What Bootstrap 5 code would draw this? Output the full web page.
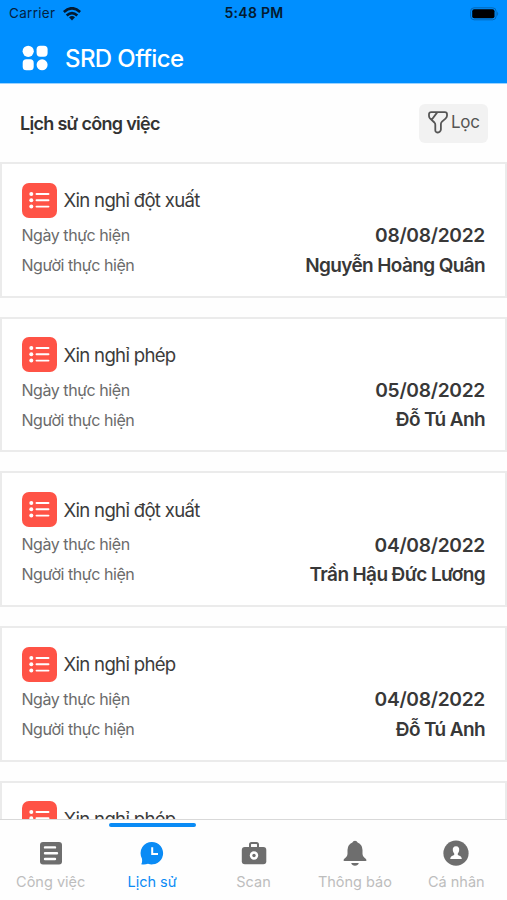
<!DOCTYPE html>
<html lang="vi">
<head>
<meta charset="utf-8">
<meta name="viewport" content="width=device-width, initial-scale=1">
<title>SRD Office</title>
<link href="https://cdn.jsdelivr.net/npm/bootstrap@5.3.0/dist/css/bootstrap.min.css" rel="stylesheet">
<style>
  body { font-family: Inter, "Liberation Sans", sans-serif; background: #fefefe; color: #333; height: 900px; line-height: 1.2; }
  svg { display: block; flex: none; }
  .app-head { background: #008fff; height: 84px; border-bottom: 1px solid #9bd3ff; }
  .status { height: 27px; padding: 0 8px 0 9px; font-size: 13.5px; color: #04223f; }
  .status > * { flex: 1 1 0; }
  .carrier { letter-spacing: .3px; }
  .clock { font-weight: 600; font-size: 14px; letter-spacing: .3px; color: #041a30; }
  .brand { height: 61px; padding: 1px 0 0 22px; gap: 17px; color: #fff; font-size: 24px; font-weight: 500; letter-spacing: -.6px; }
  .brand span { padding-top: 2px; }
  .title-row { height: 78px; padding: 0 19px 0 20px; }
  .page-title { font-size: 18px; font-weight: 600; letter-spacing: -.7px; padding-top: 1px; }
  .filter { width: 69px; height: 39px; background: #f2f2f2; border-radius: 6px; font-size: 17px; color: #555; gap: 3px; padding: 0 0 1px 9px; letter-spacing: -.3px; }
  .job { height: 135.5px; margin-bottom: 19.2px; border: 2px solid #ebebeb; border-radius: 0; background: #fff; padding: 18px 20px 0 19.5px; flex: none; }
  .job-name { height: 36px; gap: 7px; margin-bottom: 2.8px; font-size: 18.6px; letter-spacing: -.7px; color: #3c3c3c; }
  .job-name span { padding-top: 1px; }
  .job-line { height: 29.8px; color: #6b6b6b; font-size: 16px; letter-spacing: -.45px; }
  .job-line strong { color: #383838; font-weight: 600; font-size: 19.2px; letter-spacing: -.3px; }
  .job-line .person { font-size: 19px; letter-spacing: -.62px; padding-top: 1px; }
  .tabs { height: 81px; border-top: 1px solid #d9d9d9; background: #fefefe; }
  .tab { flex: 1 1 0; color: #bdbdbd; font-size: 14.5px; padding-top: 20px; gap: 7px; }
  .tab svg { color: #6e6e6e; }
  .tab.current, .tab.current svg { color: #0a8bf5; }
  .tab-bar { top: 3px; left: 8px; width: 87px; height: 4px; border-radius: 2px; background: #0a8bf5; }
</style>
</head>
<body class="d-flex flex-column overflow-hidden">
<svg width="0" height="0" class="position-absolute"><defs>
  <symbol id="list" viewBox="0 0 35 35"><rect width="35" height="35" rx="7" fill="#ff5346"/><g fill="#fff"><circle cx="9.3" cy="11" r="2"/><circle cx="9.3" cy="17.3" r="2"/><circle cx="9.3" cy="23.6" r="2"/></g><path d="M14.5 11H26.5M14.5 17.3H26.5M14.5 23.6H26.5" stroke="#fff" stroke-width="1.9" stroke-linecap="round"/></symbol>
</defs></svg>
<header class="app-head flex-shrink-0">
  <div class="status d-flex align-items-center">
    <div class="d-flex align-items-center"><span class="carrier me-1 pe-1">Carrier</span>
      <svg width="18" height="14" viewBox="0 0 18 14" fill="none" stroke="#041a30" stroke-width="2.7"><path d="M.8 5Q9-2.4 17.2 5M3.7 8.5Q9 3.8 14.3 8.5"/><path d="M6 10.3Q9 7.8 12 10.3L9 13.5Z" fill="#041a30" stroke="none"/></svg></div>
    <div class="clock text-center">5:48 PM</div>
    <div class="d-flex justify-content-end"><svg width="29" height="14" viewBox="0 0 29 14"><rect x=".6" y=".8" width="25.5" height="12" rx="3.5" fill="none" stroke="#0467b5"/><rect x="2.2" y="2.3" width="22.3" height="9" rx="2" fill="#000"/><path d="M27.2 4.5q2 2.3 0 4.6z" fill="#0467b5"/></svg></div>
  </div>
  <div class="brand d-flex align-items-center"><svg width="26" height="26" viewBox="0 0 26 26" fill="#fff"><circle cx="6.2" cy="6.3" r="5.6"/><rect x="14.6" y=".7" width="11" height="11" rx="3.6"/><rect x=".7" y="14.3" width="11" height="11" rx="3.6"/><circle cx="20.1" cy="19.8" r="5.5"/></svg><span>SRD Office</span></div>
</header>
<div class="title-row d-flex align-items-center justify-content-between flex-shrink-0">
  <div class="page-title">Lịch sử công việc</div>
  <button class="filter btn border-0 d-flex align-items-center"><svg width="20" height="23" viewBox="0 0 20 23" fill="none" stroke="#555" stroke-width="1.8" stroke-linejoin="round"><path d="M3.3 1.2H16.8Q19 1.2 19 3.2V4.8Q19 6.3 17.5 7.6L14 10.6Q12.9 11.6 12.9 13V18.6Q12.9 19.9 11.7 20.7Q9.7 22 8.2 21.1Q7.3 20.5 7.3 19.2V13.7Q7.3 12.5 6.4 11.5L2 7.3Q1 6.2 1 4.9V3.2Q1 1.2 3.3 1.2ZM9.2 1.4L3.7 8.8"/></svg><span>Lọc</span></button>
</div>
<main class="flex-grow-1 overflow-hidden d-flex flex-column">
  <article class="job card"><div class="job-name d-flex align-items-center"><svg width="35" height="35"><use href="#list"/></svg><span>Xin nghỉ đột xuất</span></div><div class="job-line d-flex align-items-center justify-content-between"><span>Ngày thực hiện</span><strong>08/08/2022</strong></div><div class="job-line d-flex align-items-center justify-content-between"><span>Người thực hiện</span><strong class="person">Nguyễn Hoàng Quân</strong></div></article>
  <article class="job card"><div class="job-name d-flex align-items-center"><svg width="35" height="35"><use href="#list"/></svg><span>Xin nghỉ phép</span></div><div class="job-line d-flex align-items-center justify-content-between"><span>Ngày thực hiện</span><strong>05/08/2022</strong></div><div class="job-line d-flex align-items-center justify-content-between"><span>Người thực hiện</span><strong class="person">Đỗ Tú Anh</strong></div></article>
  <article class="job card"><div class="job-name d-flex align-items-center"><svg width="35" height="35"><use href="#list"/></svg><span>Xin nghỉ đột xuất</span></div><div class="job-line d-flex align-items-center justify-content-between"><span>Ngày thực hiện</span><strong>04/08/2022</strong></div><div class="job-line d-flex align-items-center justify-content-between"><span>Người thực hiện</span><strong class="person">Trần Hậu Đức Lương</strong></div></article>
  <article class="job card"><div class="job-name d-flex align-items-center"><svg width="35" height="35"><use href="#list"/></svg><span>Xin nghỉ phép</span></div><div class="job-line d-flex align-items-center justify-content-between"><span>Ngày thực hiện</span><strong>04/08/2022</strong></div><div class="job-line d-flex align-items-center justify-content-between"><span>Người thực hiện</span><strong class="person">Đỗ Tú Anh</strong></div></article>
  <article class="job card"><div class="job-name d-flex align-items-center"><svg width="35" height="35"><use href="#list"/></svg><span>Xin nghỉ phép</span></div></article>
</main>
<nav class="tabs d-flex flex-shrink-0">
  <div class="tab d-flex flex-column align-items-center"><svg width="26" height="26" viewBox="0 0 26 26"><rect x="2" y="2" width="22" height="22.5" rx="3" fill="currentColor"/><path d="M7 7.4H17M7 13.2H19M7 19H17" stroke="#fff" stroke-width="2.4" stroke-linecap="round"/></svg><span>Công việc</span></div>
  <div class="tab current position-relative d-flex flex-column align-items-center"><i class="tab-bar position-absolute"></i><svg width="26" height="26" viewBox="0 0 26 26"><path d="M13 2A11.2 11.2 0 1 1 9 23.7Q6 24.8 2.2 24.2Q3.6 22 2.9 18.5A11.2 11.2 0 0 1 13 2Z" fill="currentColor"/><path d="M13.2 7.3V14H19" stroke="#fff" stroke-width="2" fill="none"/></svg><span>Lịch sử</span></div>
  <div class="tab d-flex flex-column align-items-center"><svg width="26" height="26" viewBox="0 0 26 26"><path d="M9 8V4.5Q9 3 10.5 3H15.5Q17 3 17 4.5V8" fill="none" stroke="currentColor" stroke-width="2"/><rect x=".8" y="7" width="24.5" height="17.2" rx="3" fill="currentColor"/><circle cx="13" cy="15.5" r="4.2" fill="#fff"/><circle cx="13" cy="15.5" r="1.7" fill="currentColor"/></svg><span>Scan</span></div>
  <div class="tab d-flex flex-column align-items-center"><svg width="26" height="26" viewBox="0 0 26 26" fill="currentColor"><path d="M13 .8Q15 .8 15.6 2.5Q20.5 4.5 20.5 10V14Q20.5 16 22.5 17.7Q24.5 19 24.5 20.2Q24.5 21 23.5 21H2.5Q1.5 21 1.5 20.2Q1.5 19 3.5 17.7Q5.5 16 5.5 14V10Q5.5 4.5 10.4 2.5Q11 .8 13 .8ZM9.2 23H16.8Q16 25.8 13 25.8Q10 25.8 9.2 23Z"/></svg><span>Thông báo</span></div>
  <div class="tab d-flex flex-column align-items-center"><svg width="26" height="26" viewBox="0 0 26 26"><circle cx="13" cy="13.2" r="12.6" fill="currentColor"/><path d="M13 6.3C15.5 6.3 16.4 8 16.2 10.2Q16 12.3 14.8 13.5V15Q18.8 16 18.8 19H7.2Q7.2 16 11.2 15V13.5Q10 12.3 9.8 10.2C9.6 8 10.5 6.3 13 6.3Z" fill="#fff"/></svg><span>Cá nhân</span></div>
</nav>
<script src="https://cdn.jsdelivr.net/npm/bootstrap@5.3.0/dist/js/bootstrap.bundle.min.js"></script>
</body>
</html>
